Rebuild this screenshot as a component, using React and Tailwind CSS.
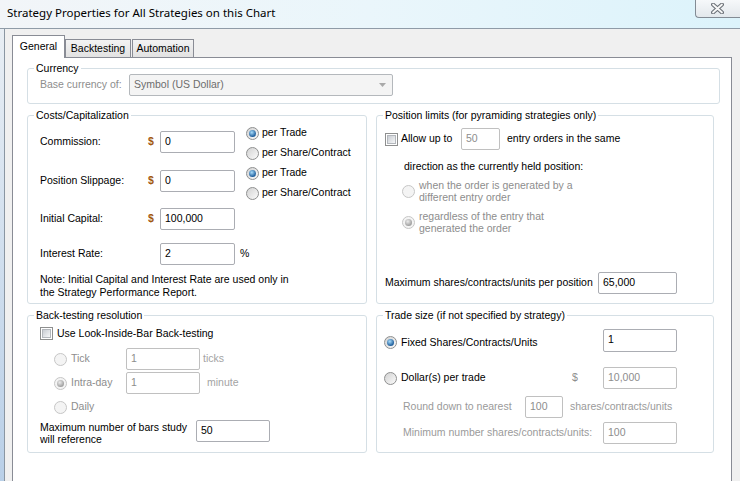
import React from 'react';

const Radio = ({ checked, disabled }) => (
  <span
    className={`flex items-center justify-center w-[13px] h-[13px] shrink-0 rounded-full border ${
      disabled
        ? 'border-[#c6c6c6] bg-[#f4f4f4]'
        : 'border-[#8e8f8f] bg-gradient-to-br from-[#d2d2d2] to-[#fbfbfb]'
    }`}
  >
    {checked && (
      <span
        className={`w-[7px] h-[7px] rounded-full ${
          disabled
            ? 'bg-[radial-gradient(circle_at_40%_35%,#ececec,#9a9a9a_75%)]'
            : 'bg-[radial-gradient(circle_at_40%_35%,#a8dcfb,#1d5d9b_70%)]'
        }`}
      />
    )}
  </span>
);

const CheckBox = () => (
  <span className="flex items-center justify-center w-[13px] h-[13px] shrink-0 border border-[#8e8f8f] bg-white">
    <span className="w-[9px] h-[9px] border border-[#b3b7bc] bg-gradient-to-br from-[#c9cdd3] to-[#f6f7f8]" />
  </span>
);

const TextBox = ({ value, disabled, className = '' }) => (
  <div
    className={`h-[22px] shrink-0 border rounded-[2px] bg-white pl-[4px] pt-[2px] leading-[14px] ${
      disabled ? 'border-[#c0c0c0] text-[#8d8d8d]' : 'border-[#abadb3] text-black'
    } ${className}`}
  >
    {value}
  </div>
);

const GroupBox = ({ title, className = '', children }) => (
  <fieldset className={`min-w-0 border border-[#d5dfe5] rounded-[3px] ${className}`}>
    <legend className="ml-[6px] px-[2px] leading-[12px] text-black">{title}</legend>
    {children}
  </fieldset>
);

const Dollar = () => <span className="w-[12px] shrink-0 font-bold text-[#a1580f]">$</span>;

export default function App() {
  return (
    <div className="w-[740px] h-[481px] overflow-hidden bg-[#f0f0f0] text-[10.5px] text-black font-['Liberation_Sans',Arial,sans-serif]">
      {/* title bar */}
      <div className="flex h-[29px] border-b border-[#8f9ba7] bg-gradient-to-r from-[#f2f5f8] via-[#eaf6fb] to-[#dcf3fb]">
        <div className="pl-[7px] pt-[6px] text-[11.5px] leading-[14px] font-['Noto_Sans',sans-serif]">
          Strategy Properties for All Strategies on this Chart
        </div>
        <div className="ml-auto -mt-px flex h-[19px] w-[45px] items-center justify-center rounded-bl-[4px] border border-r-0 border-[#838b94] bg-gradient-to-b from-[#f6f8fa] to-[#e3e8ec] pr-[1px]">
          <svg width="13" height="11" viewBox="0 0 13 11">
            <path d="M2 1.5 L11 9.5 M11 1.5 L2 9.5" stroke="#6b7077" strokeWidth="4" strokeLinecap="round" />
            <path d="M2 1.5 L11 9.5 M11 1.5 L2 9.5" stroke="#f7f7f7" strokeWidth="1.8" strokeLinecap="round" />
          </svg>
        </div>
      </div>

      <div className="flex h-[470px]">
        {/* window frame edge */}
        <div className="w-[5px] shrink-0 border-r border-[#8a96a2] bg-gradient-to-b from-[#e8eef4] to-[#b7cee7]" />

        <div className="flex flex-1 flex-col pl-[7px] pt-[6px]">
          {/* tabs */}
          <div className="flex items-end">
            <div className="relative z-10 -mb-px h-[23px] w-[53px] border border-b-0 border-[#898c95] bg-white pt-[4px] text-center leading-[13px]">
              General
            </div>
            <div className="h-[18px] w-[66px] border border-b-0 border-[#898c95] bg-gradient-to-b from-[#f3f3f3] to-[#e2e2e2] pt-[2px] text-center leading-[13px]">
              Backtesting
            </div>
            <div className="ml-px h-[18px] w-[62px] border border-b-0 border-[#898c95] bg-gradient-to-b from-[#f3f3f3] to-[#e2e2e2] pt-[2px] text-center leading-[13px]">
              Automation
            </div>
          </div>

          {/* tab page */}
          <div className="w-[720px] flex-1 border border-[#898c95] bg-white pl-[14px] pt-[4px]">
            <GroupBox title="Currency" className="h-[42px] w-[693px]">
              <div className="flex h-[22px] items-center pl-[12px]">
                <span className="w-[89px] shrink-0 text-[#8d8d8d]">Base currency of:</span>
                <div className="flex h-[22px] w-[264px] items-center rounded-[2px] border border-[#b4b8bc] bg-[#f4f4f4] pl-[4px] pr-[6px] text-[#6d6d6d]">
                  <span>Symbol (US Dollar)</span>
                  <svg className="ml-auto" width="7" height="4" viewBox="0 0 7 4">
                    <path d="M0 0 L7 0 L3.5 4 Z" fill="#a9a9a9" />
                  </svg>
                </div>
              </div>
            </GroupBox>

            <div className="mt-[5px] flex gap-[9px]">
              <GroupBox title="Costs/Capitalization" className="h-[195px] w-[340px]">
                <div className="pl-[12px]">
                  <div className="mt-[2px] flex items-start">
                    <div className="mt-[8px] flex h-[22px] items-center">
                      <span className="w-[108px] shrink-0">Commission:</span>
                      <Dollar />
                      <TextBox value="0" className="w-[75px]" />
                    </div>
                    <div className="ml-[11px] flex flex-col">
                      <div className="flex h-[20px] items-center gap-[3px]"><Radio checked /><span>per Trade</span></div>
                      <div className="flex h-[20px] items-center gap-[3px]"><Radio /><span>per Share/Contract</span></div>
                    </div>
                  </div>
                  <div className="flex items-start">
                    <div className="mt-[7px] flex h-[22px] items-center">
                      <span className="w-[108px] shrink-0">Position Slippage:</span>
                      <Dollar />
                      <TextBox value="0" className="w-[75px]" />
                    </div>
                    <div className="ml-[11px] flex flex-col">
                      <div className="flex h-[20px] items-center gap-[3px]"><Radio checked /><span>per Trade</span></div>
                      <div className="flex h-[20px] items-center gap-[3px]"><Radio /><span>per Share/Contract</span></div>
                    </div>
                  </div>
                  <div className="mt-[5px] flex h-[22px] items-center">
                    <span className="w-[108px] shrink-0">Initial Capital:</span>
                    <Dollar />
                    <TextBox value="100,000" className="w-[75px]" />
                  </div>
                  <div className="mt-[13px] flex h-[22px] items-center">
                    <span className="w-[120px] shrink-0">Interest Rate:</span>
                    <TextBox value="2" className="w-[75px]" />
                    <span className="ml-[5px]">%</span>
                  </div>
                  <p className="mt-[8px] leading-[13px]">
                    Note: Initial Capital and Interest Rate are used only in
                    <br />
                    the Strategy Performance Report.
                  </p>
                </div>
              </GroupBox>

              <GroupBox title="Position limits (for pyramiding strategies only)" className="h-[195px] w-[338px]">
                <div className="mt-[7px] flex h-[22px] items-center pl-[8px]">
                  <CheckBox />
                  <span className="ml-[3px] w-[60px] shrink-0">Allow up to</span>
                  <TextBox value="50" disabled className="w-[39px]" />
                  <span className="ml-[7px]">entry orders in the same</span>
                </div>
                <p className="mt-[10px] pl-[27px] leading-[13px]">direction as the currently held position:</p>
                <div className="mt-[6px] flex items-center pl-[25px]">
                  <Radio disabled />
                  <span className="ml-[4px] leading-[12px] text-[#8d8d8d]">
                    when the order is generated by a<br />different entry order
                  </span>
                </div>
                <div className="mt-[7px] flex items-center pl-[25px]">
                  <Radio checked disabled />
                  <span className="ml-[4px] leading-[12px] text-[#8d8d8d]">
                    regardless of the entry that<br />generated the order
                  </span>
                </div>
                <div className="mt-[38px] flex h-[22px] items-center pl-[8px]">
                  <span className="w-[213px] shrink-0">Maximum shares/contracts/units per position</span>
                  <TextBox value="65,000" className="w-[79px]" />
                </div>
              </GroupBox>
            </div>

            <div className="mt-[5px] flex gap-[9px]">
              <GroupBox title="Back-testing resolution" className="h-[144px] w-[340px]">
                <div className="mt-[5px] flex h-[15px] items-center pl-[12px]">
                  <CheckBox />
                  <span className="ml-[4px]">Use Look-Inside-Bar Back-testing</span>
                </div>
                <div className="mt-[6px] pl-[26px]">
                  <div className="flex h-[24px] items-center">
                    <div className="flex w-[72px] shrink-0 items-center gap-[4px] text-[#8d8d8d]"><Radio disabled /><span>Tick</span></div>
                    <TextBox value="1" disabled className="w-[74px]" />
                    <span className="ml-[3px] text-[#a3a3a3]">ticks</span>
                  </div>
                  <div className="flex h-[24px] items-center">
                    <div className="flex w-[72px] shrink-0 items-center gap-[4px] text-[#8d8d8d]"><Radio checked disabled /><span>Intra-day</span></div>
                    <TextBox value="1" disabled className="w-[74px]" />
                    <span className="ml-[7px] text-[#a3a3a3]">minute</span>
                  </div>
                  <div className="flex h-[24px] items-center">
                    <div className="flex w-[72px] shrink-0 items-center gap-[4px] text-[#8d8d8d]"><Radio disabled /><span>Daily</span></div>
                  </div>
                </div>
                <div className="flex items-start pl-[12px]">
                  <span className="mt-[2px] w-[156px] shrink-0 leading-[12px]">
                    Maximum number of bars study<br />will reference
                  </span>
                  <TextBox value="50" className="mt-[1px] w-[74px]" />
                </div>
              </GroupBox>

              <GroupBox title="Trade size (if not specified by strategy)" className="h-[144px] w-[338px]">
                <div className="mt-[8px] flex items-start pl-[7px]">
                  <div className="mt-[7px] flex h-[13px] w-[219px] shrink-0 items-center gap-[4px]">
                    <Radio checked />
                    <span>Fixed Shares/Contracts/Units</span>
                  </div>
                  <TextBox value="1" className="h-[23px] w-[74px]" />
                </div>
                <div className="mt-[15px] flex h-[22px] items-center pl-[7px]">
                  <div className="flex w-[188px] shrink-0 items-center gap-[4px]">
                    <Radio />
                    <span>Dollar(s) per trade</span>
                  </div>
                  <span className="w-[31px] shrink-0 text-[#8d8d8d]">$</span>
                  <TextBox value="10,000" disabled className="w-[74px]" />
                </div>
                <div className="mt-[7px] flex h-[22px] items-center pl-[26px] text-[#9a9a9a]">
                  <span className="w-[122px] shrink-0">Round down to nearest</span>
                  <TextBox value="100" disabled className="w-[38px]" />
                  <span className="ml-[7px]">shares/contracts/units</span>
                </div>
                <div className="mt-[4px] flex h-[22px] items-center pl-[26px] text-[#9a9a9a]">
                  <span className="w-[200px] shrink-0">Minimum number shares/contracts/units:</span>
                  <TextBox value="100" disabled className="w-[74px]" />
                </div>
              </GroupBox>
            </div>
          </div>
        </div>
      </div>
    </div>
  );
}
